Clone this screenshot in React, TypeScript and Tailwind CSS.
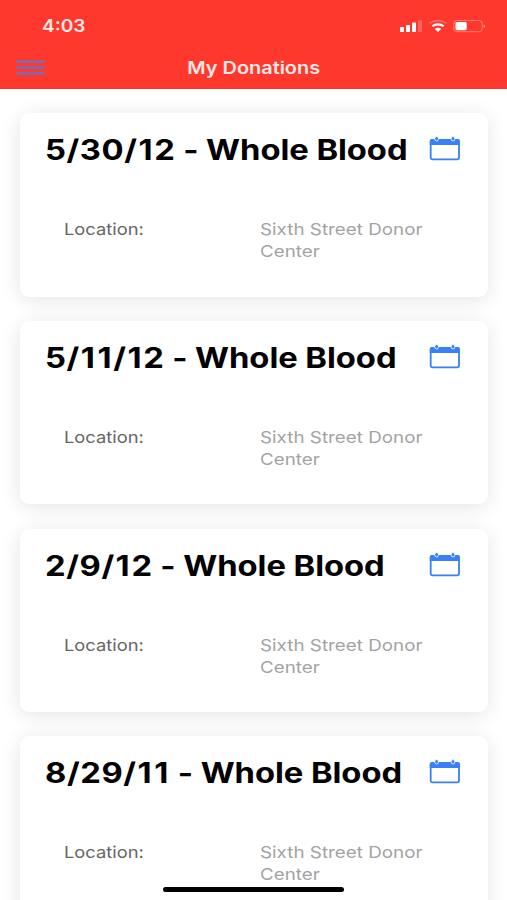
const donations = [
  { date: '5/30/12', location: 'Sixth Street Donor Center' },
  { date: '5/11/12', location: 'Sixth Street Donor Center' },
  { date: '2/9/12', location: 'Sixth Street Donor Center' },
  { date: '8/29/11', location: 'Sixth Street Donor Center' },
];

function StatusIcons() {
  return (
    <svg width="88" height="16" viewBox="0 0 88 16" fill="none" className="block">
      <g fill="#fff">
        <rect x="1" y="9" width="4" height="5" rx="0.8" />
        <rect x="7" y="7" width="4" height="7" rx="0.8" />
        <rect x="13" y="4.5" width="4" height="9.5" rx="0.8" />
        <rect x="19" y="2.2" width="4" height="11.8" rx="0.8" opacity="0.22" />
      </g>
      <path d="M30.5 5.2C35.5 1.8 42.5 1.8 47.5 5.2" stroke="#fff" strokeOpacity="0.25" strokeWidth="1.8" />
      <path d="M33.3 8.3C36.6 5.7 41.4 5.7 44.7 8.3" stroke="#fff" strokeWidth="2.1" />
      <path d="M35.8 11.1C37.7 9.3 40.3 9.3 42.2 11.1L39 13.9Z" fill="#fff" />
      <rect x="54.7" y="2.5" width="28.5" height="11.2" rx="3" stroke="#fff" strokeOpacity="0.35" />
      <rect x="56.5" y="4" width="11.2" height="8.2" rx="1.4" fill="#fff" />
      <path d="M84.7 6.2C86.6 7.2 86.6 9 84.7 10Z" fill="#fff" fillOpacity="0.5" />
    </svg>
  );
}

function CalendarIcon() {
  return (
    <svg width="32" height="26" viewBox="0 0 32 26" fill="none" className="block">
      <rect x="1.7" y="4" width="28.3" height="19.4" rx="1.8" stroke="#397ff5" strokeWidth="1.8" />
      <path d="M0.8 9V5Q0.8 3 3 3H28.7Q30.9 3 30.9 5V9Z" fill="#397ff5" />
      <g fill="#397ff5" stroke="#fff" strokeWidth="0.8">
        <ellipse cx="7.6" cy="2.8" rx="1.9" ry="2.2" />
        <ellipse cx="24" cy="2.8" rx="1.9" ry="2.2" />
      </g>
    </svg>
  );
}

// Inter's "1" is narrow, so it gets a little more room than the other digits.
function DateText({ date }: { date: string }) {
  return (
    <span className="tracking-[0.5px]">
      {date.split(/(1)/).map((part, i) =>
        part === '1' ? (
          <span key={i} className="pl-[0.8px] pr-[0.9px]">
            1
          </span>
        ) : (
          part
        ),
      )}
    </span>
  );
}

function DonationCard({ date, location }: { date: string; location: string }) {
  return (
    <article className="h-[183.5px] shrink-0 rounded-[9px] bg-white pl-[25px] pr-[27px] shadow-[0_3px_20px_rgba(0,0,0,0.11)]">
      <div className="flex items-start justify-between pt-[20px]">
        <h2 className="origin-left scale-x-[1.17] whitespace-nowrap text-[28px] font-bold leading-[34px] tracking-[-0.05px] text-black">
          <DateText date={date} /> - Whole Blood
        </h2>
        <div className="pt-[3px]">
          <CalendarIcon />
        </div>
      </div>
      <div className="flex pl-[18.5px] pt-[51px] text-[16.5px] leading-[22px]">
        <div className="w-[196.5px]">
          <span className="inline-block origin-left scale-x-[1.11] text-[#656565]">Location:</span>
        </div>
        <div className="w-[155px] origin-left scale-x-[1.14] text-[#a3a3a3]">{location}</div>
      </div>
    </article>
  );
}

export default function App() {
  return (
    <div className="relative h-[900px] w-[507px] overflow-hidden bg-white font-['Inter','Liberation_Sans',sans-serif]">
      <header className="h-[89px] bg-[#ff382d] text-white">
        <div className="flex h-[45px] items-start justify-between pl-[42px] pr-[20px] pt-[16px]">
          <span className="origin-left scale-x-[1.12] text-[17px] font-semibold leading-[20px] text-[#ffe9e6]">4:03</span>
          <div className="pt-[2px]">
            <StatusIcons />
          </div>
        </div>
        <div className="grid grid-cols-[1fr_auto_1fr] items-center pl-[16px] pr-[15px] pt-[12.5px]">
          <div className="flex w-[29px] flex-col gap-[3px]">
            <i className="h-[3px] rounded-full bg-[#8d64a3]" />
            <i className="h-[3px] rounded-full bg-[#8d64a3]" />
            <i className="h-[3px] rounded-full bg-[#8d64a3]" />
          </div>
          <h1 className="scale-x-[1.17] text-[17px] font-semibold leading-[20px] text-[#ffe9e6]">My Donations</h1>
        </div>
      </header>
      <main className="flex flex-col gap-[24.3px] pl-[20px] pr-[19px] pt-[24px]">
        {donations.map((d) => (
          <DonationCard key={d.date} {...d} />
        ))}
      </main>
      <div className="absolute bottom-[8px] left-[163px] h-[5px] w-[181px] rounded-full bg-black" />
    </div>
  );
}
